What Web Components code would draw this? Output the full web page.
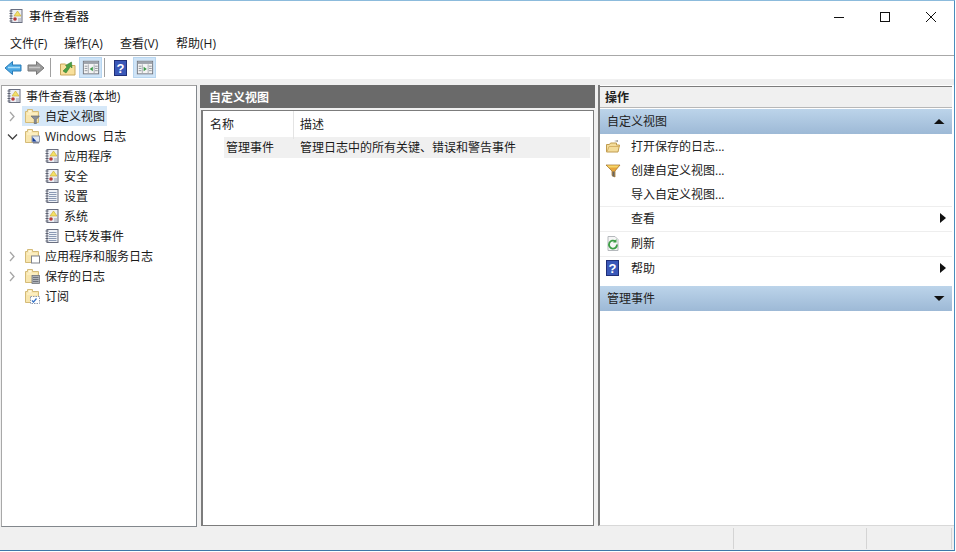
<!DOCTYPE html>
<html lang="zh">
<head>
<meta charset="utf-8">
<title>事件查看器</title>
<style>
  html, body { margin: 0; background: #fff; }
  body { font: 12px "Open Sans", "Noto Sans CJK SC", sans-serif; color: #1a1a1a; }
</style>
</head>
<body>
<ev-window>
  <ev-titlebar slot="title">事件查看器</ev-titlebar>
  <ev-menubar slot="menu"></ev-menubar>
  <ev-toolbar slot="tools"></ev-toolbar>

  <ev-tree slot="left">
    <ev-node icon="log" depth="0">事件查看器 (本地)</ev-node>
    <ev-node icon="folderfilter" depth="1" arrow="right" selected>自定义视图</ev-node>
    <ev-node icon="folderwin" depth="1" arrow="down" style="word-spacing:3px">Windows 日志</ev-node>
    <ev-node icon="log" depth="2">应用程序</ev-node>
    <ev-node icon="log" depth="2">安全</ev-node>
    <ev-node icon="page" depth="2">设置</ev-node>
    <ev-node icon="log" depth="2">系统</ev-node>
    <ev-node icon="page" depth="2">已转发事件</ev-node>
    <ev-node icon="folderapp" depth="1" arrow="right">应用程序和服务日志</ev-node>
    <ev-node icon="foldersave" depth="1" arrow="right">保存的日志</ev-node>
    <ev-node icon="foldersub" depth="1">订阅</ev-node>
  </ev-tree>

  <ev-views slot="center"></ev-views>

  <ev-actions slot="right">
    <ev-section open>自定义视图</ev-section>
    <ev-action icon="open">打开保存的日志...</ev-action>
    <ev-action icon="funnel">创建自定义视图...</ev-action>
    <ev-action>导入自定义视图...</ev-action>
    <ev-action line submenu>查看</ev-action>
    <ev-action line icon="refresh">刷新</ev-action>
    <ev-action line icon="help" submenu>帮助</ev-action>
    <ev-section style="margin-top:5px">管理事件</ev-section>
  </ev-actions>

  <ev-statusbar slot="status"></ev-statusbar>
</ev-window>

<script>
const FOLDER = `<path d="M1.5 14.500V3.500h2V1.500h5v2h6v11z" fill="#f8e6ae" stroke="#d4bb78"/><path d="M4.500 2.500h3v2h-3z" fill="#fff8e0"/><path d="M3 6h10" stroke="#fff6d4"/>`;
const PANE = `<rect x="1.500" y="2.500" width="17" height="14" fill="#f4f4f4" stroke="#70747c"/><path d="M2 3h16v2.500H2z" fill="#9ea3ab"/><path d="M7 6v10M13.500 6v10" stroke="#a4a8b0"/><path d="M3 8h3M3 10.500h3M3 13h3M14.500 8h3M14.500 10.500h3M14.500 13h3" stroke="#8a8e96"/>`;
const ICONS = {
  log: `<rect x="3" y="1.500" width="11" height="13" fill="#eceef4" stroke="#6a6f80"/>
    <path d="M1.500 3h3M1.500 5.500h3M1.500 8h3M1.500 10.500h3M1.500 13h3" stroke="#5a6070"/>
    <path d="M9.500 3l3.500 5H6z" fill="#f2e06a" stroke="#c9a92c" stroke-width=".6"/>
    <circle cx="7" cy="11" r="1.800" fill="#b83a3a"/><path d="M10 11h3M10 13h3" stroke="#9aa0b0"/>`,
  page: `<rect x="3" y="1.500" width="11" height="13" fill="#eef1f6" stroke="#6a6f80"/>
    <path d="M1.500 3h3M1.500 5.500h3M1.500 8h3M1.500 10.500h3M1.500 13h3" stroke="#5a6070"/>
    <path d="M5 4.500h7.500M5 6.500h7.500M5 8.500h7.500M5 10.500h7.500M5 12.500h7.500" stroke="#8b9ab5"/>`,
  folderfilter: FOLDER + `<path d="M7 8h8.500l-3.200 3.500v4.500h-2v-4.500z" fill="#8a8f98" stroke="#60646c" stroke-width=".6"/>`,
  folderwin: FOLDER + `<rect x="8" y="8" width="7.500" height="6" fill="#dfe6f2" stroke="#7b86a0" stroke-width=".8"/><path d="M8.500 9l4 4.500h-4z" fill="#123a96"/><rect x="9" y="14" width="6" height="1.500" fill="#7a8090"/>`,
  folderapp: FOLDER + `<rect x="7.500" y="8" width="8" height="7" fill="#fff" stroke="#80848c"/>`,
  foldersave: FOLDER + `<rect x="8" y="7.500" width="7.500" height="8" fill="#aeb2b8" stroke="#70747c" stroke-width=".8"/><path d="M9 9.500h5.500M9 11.500h5.500M9 13.500h5.500" stroke="#70747c"/>`,
  foldersub: FOLDER + `<rect x="6.500" y="8.500" width="9" height="7" fill="#fff" stroke="#8c98ae" stroke-dasharray="1.500 1"/><path d="M8 12.500l1.500 1.500 3-3.500" fill="none" stroke="#3572c6" stroke-width="1.200"/>`,
  back: `<path d="M1 9l7.500-6.500V6H17v6H8.500v3.500z" fill="#4aa8e4" stroke="#2a7cb8"/><path d="M4 8.500h12" stroke="#a8dcf8" stroke-width="1.500"/>`,
  forward: `<path d="M17 9L9.500 2.500V6H1v6h8.500v3.500z" fill="#9c9c9c" stroke="#787878"/><path d="M2 8.500h11" stroke="#c8c8c8" stroke-width="1.500"/>`,
  up: `<path d="M1.500 16V5h5l1.500 1.500h8V16z" fill="#f8e09c" stroke="#c8a85c"/><path d="M4 12l4-4-1.500-1.500L12.500 3l.5 6-1.500-1.500L7 14z" fill="#4aa044" stroke="#2c742a" stroke-width=".5"/>`,
  paneleft: PANE + `<path d="M12 8.500v5l-3.500-2.500z" fill="#3a9a48"/>`,
  paneright: PANE + `<path d="M8.500 8.500v5l3.500-2.500z" fill="#3a9a48"/>`,
  help: `<rect x="1.500" y="1.500" width="12" height="15" fill="#3a58b8" stroke="#1f2f78"/><text x="7.500" y="13.500" text-anchor="middle" font-family="Liberation Sans" font-weight="700" font-size="13" fill="#fff">?</text>`,
  open: `<path d="M1.500 14V6.500h3l1-1.500h6v2h3L13 14z" fill="#f3dc9a" stroke="#c09c50"/><path d="M2 14l2-5.500h11" fill="none" stroke="#d6b268"/><path d="M9 3l4-1v2z" fill="#9a9a9a"/>`,
  funnel: `<path d="M1 3h14l-5 6v6l-3-1.500V9z" fill="#e6a63c" stroke="#9a6e28" stroke-width=".7"/><path d="M2 3.500h12l-2 2H4z" fill="#f6d66a"/><path d="M7.500 9.500h2v5h-2z" fill="#666"/>`,
  refresh: `<path d="M3 1.500h7l3 3v11H3z" fill="#f6f6f6" stroke="#b4b8bc"/><path d="M12 9.500a4 4 0 1 1-1.500-3" fill="none" stroke="#3d9e46" stroke-width="1.800"/><path d="M11.500 4v3.500H8z" fill="#3d9e46"/>`
};

class EvIcon extends HTMLElement {
  connectedCallback() {
    const size = this.getAttribute("size") || 16;
    const h = this.getAttribute("h") || size;
    const vb = this.getAttribute("vb") || `0 0 ${size} ${h}`;
    this.attachShadow({ mode: "open" }).innerHTML = `
      <style>:host { display: block; width: ${size}px; height: ${h}px; flex: none; } svg { display: block; }</style>
      <svg width="${size}" height="${h}" viewBox="${vb}">${ICONS[this.getAttribute("name")] || ""}</svg>`;
  }
}

class EvWindow extends HTMLElement {
  constructor() {
    super();
    this.attachShadow({ mode: "open" }).innerHTML = `
      <style>
        :host { display: flex; flex-direction: column; width: 955px; height: 551px; box-sizing: border-box;
                background: #fff; border-right: 1px solid #4a8cbc; border-bottom: 1px solid #3f78a8; border-top: 1px solid #8cbbdc; }
        .panes { flex: 1; min-height: 0; display: grid; grid-template-columns: 197px 395px 1fr; column-gap: 3px;
                 background: #f0f0f0; padding-top: 6px; }
      </style>
      <slot name="title"></slot><slot name="menu"></slot><slot name="tools"></slot>
      <div class="panes"><slot name="left"></slot><slot name="center"></slot><slot name="right"></slot></div>
      <slot name="status"></slot>`;
  }
}

class EvTitlebar extends HTMLElement {
  constructor() {
    super();
    this.attachShadow({ mode: "open" }).innerHTML = `
      <style>
        :host { display: flex; align-items: center; height: 31px; padding-left: 8px; font-size: 12px; color: #111; }
        .label { margin-left: 5px; flex: 1; margin-top: -1px; }
        .btn { width: 46px; height: 31px; display: flex; align-items: center; justify-content: center; }
        ev-icon { margin-top: -1px; }
      </style>
      <ev-icon name="log"></ev-icon><span class="label"><slot></slot></span>
      <span class="btn"><svg width="12" height="12" viewBox="0 0 12 12"><path d="M1 6.500h10" stroke="#111"/></svg></span>
      <span class="btn"><svg width="12" height="12" viewBox="0 0 12 12"><rect x="1.500" y="1.500" width="9" height="9" fill="none" stroke="#111"/></svg></span>
      <span class="btn"><svg width="12" height="12" viewBox="0 0 12 12"><path d="M1 1l10 10M11 1L1 11" stroke="#111"/></svg></span>`;
  }
}

class EvMenubar extends HTMLElement {
  constructor() {
    super();
    const items = ["文件(F)", "操作(A)", "查看(V)", "帮助(H)"];
    this.attachShadow({ mode: "open" }).innerHTML = `
      <style>
        :host { display: grid; grid-template-columns: 54px 56px 56px 56px; align-items: center; height: 24px; padding: 0 0 2px 10px; box-sizing: border-box;
                border-bottom: 1px solid #a8a8a8; color: #1a1a1a; font-size: 12px; }
        span { white-space: nowrap; }
      </style>
      ${items.map(t => `<span>${t}</span>`).join("")}`;
  }
}

class EvToolbar extends HTMLElement {
  constructor() {
    super();
    this.attachShadow({ mode: "open" }).innerHTML = `
      <style>
        :host { display: flex; align-items: center; height: 23px; padding-left: 4px; background: #fff; }
        .b { height: 21px; display: flex; align-items: center; justify-content: center; box-sizing: border-box; flex: none; }
        .on { background: #cfe4f7; border: 1px solid #b8d6f0; width: 23px; }
        .sep { width: 1px; height: 19px; background: #a0a0a0; flex: none; }
      </style>
      <span class="b"><ev-icon name="back" size="18"></ev-icon></span>
      <span class="b" style="margin-left:5px"><ev-icon name="forward" size="18"></ev-icon></span>
      <span class="sep" style="margin-left:5px"></span>
      <span class="b" style="margin-left:8px"><ev-icon name="up" size="18"></ev-icon></span>
      <span class="b on" style="margin-left:2px"><ev-icon name="paneleft" size="18" vb="0 0 20 20"></ev-icon></span>
      <span class="sep" style="margin-left:2px"></span>
      <span class="b" style="margin-left:8px"><ev-icon name="help" size="15" h="18"></ev-icon></span>
      <span class="b on" style="margin-left:5px"><ev-icon name="paneright" size="18" vb="0 0 20 20"></ev-icon></span>`;
  }
}

class EvTree extends HTMLElement {
  constructor() {
    super();
    this.attachShadow({ mode: "open" }).innerHTML = `
      <style>
        :host { display: block; margin-left: 1px; background: #fff; border: 1px solid #82878c; border-left-color: #a8a8a8; border-top-color: #a0a0a0;
                overflow: hidden; }
      </style>
      <slot></slot>`;
  }
}

class EvNode extends HTMLElement {
  constructor() {
    super();
    const depth = +this.getAttribute("depth");
    const arrow = this.getAttribute("arrow");
    const sel = this.hasAttribute("selected");
    const pad = [2, 5, 40][depth];
    const chev = arrow === "right" ? `<path d="M3 2l4 4.500-4 4.500" fill="none" stroke="#a6a6a6" stroke-width="1.300"/>`
      : arrow === "down" ? `<path d="M1 4.500l4.500 4.500 4.500-4.500" fill="none" stroke="#404040" stroke-width="1.300"/>` : "";
    this.attachShadow({ mode: "open" }).innerHTML = `
      <style>
        :host { display: flex; align-items: center; height: 20px; padding-left: ${pad}px; font-size: 12px; color: #1a1a1a; white-space: nowrap; }
        .arrow { width: 12px; flex: none; margin-right: 3px; display: ${depth === 1 ? "block" : "none"}; }
        .item { display: flex; align-items: center; height: 20px; gap: ${depth === 1 ? 5 : 4}px; padding: 0 2px; ${sel ? "background: #d6e8f8;" : ""} }
        svg { display: block; }
      </style>
      <span class="arrow"><svg width="12" height="13" viewBox="0 0 12 13">${chev}</svg></span>
      <span class="item"><ev-icon name="${this.getAttribute("icon")}"></ev-icon><span><slot></slot></span></span>`;
  }
}

class EvViews extends HTMLElement {
  constructor() {
    super();
    this.attachShadow({ mode: "open" }).innerHTML = `
      <style>
        :host { display: flex; flex-direction: column; gap: 2px; min-height: 0; font-size: 12px; }
        .head { height: 23px; flex: none; background: #6a6a6a; color: #fff; font-weight: 700; display: flex; align-items: center; padding-left: 9px; }
        .list { flex: 1; background: #fff; border: 1px solid #7c7c7c; border-left-width: 2px; margin: 0 1px 1px; padding: 0 3px 0 0; }
        .cols { display: grid; grid-template-columns: 91px 1fr; height: 26px; line-height: 28px; color: #222; }
        .cols span:first-child { padding-left: 7px; border-right: 1px solid #e4e4e4; box-sizing: border-box; }
        .cols span:last-child { padding-left: 6px; }
        .row { display: grid; grid-template-columns: 69px 1fr; margin-left: 21px; height: 21px; padding-bottom: 1px; box-sizing: border-box; align-items: center; background: #f0f0f0; }
        .row span:first-child { padding-left: 2px; }
        .row span:last-child { padding-left: 7px; }
      </style>
      <div class="head">自定义视图</div>
      <div class="list">
        <div class="cols"><span>名称</span><span>描述</span></div>
        <div class="row"><span>管理事件</span><span>管理日志中的所有关键、错误和警告事件</span></div>
      </div>`;
  }
}

class EvActions extends HTMLElement {
  constructor() {
    super();
    this.attachShadow({ mode: "open" }).innerHTML = `
      <style>
        :host { display: flex; flex-direction: column; min-height: 0; background: #fff; border-left: 2px solid #7c7c7c; border-bottom: 1px solid #d8d8d8; margin-bottom: 1px; padding-right: 2px; }
        .head { height: 20px; flex: none; background: #f0f0f0; border-top: 1px solid #7c7c7c; border-bottom: 1px solid #b8b8b8; font-weight: 700; font-size: 12px;
                padding-left: 5px; line-height: 21px; margin: 1px 0; color: #222; }
      </style>
      <div class="head">操作</div>
      <slot></slot>`;
  }
}

class EvSection extends HTMLElement {
  constructor() {
    super();
    const tri = this.hasAttribute("open") ? "M5 1L10.500 6H0z" : "M0 1h10.500L5 6z";
    this.attachShadow({ mode: "open" }).innerHTML = `
      <style>
        :host { display: flex; align-items: center; justify-content: space-between; height: 25px; flex: none; box-sizing: border-box;
                padding: 0 7px 2px 7px; font-size: 12px; color: #222; background: linear-gradient(#bcd4ea, #9db9d6); }
        svg { display: block; margin-top: 2px; }
      </style>
      <span><slot></slot></span>
      <svg width="11" height="7" viewBox="0 0 11 7"><path d="${tri}" fill="#111"/></svg>`;
  }
}

class EvAction extends HTMLElement {
  constructor() {
    super();
    const icon = this.getAttribute("icon");
    const line = this.hasAttribute("line");
    this.attachShadow({ mode: "open" }).innerHTML = `
      <style>
        :host { display: flex; align-items: center; height: ${line ? 25 : 24}px; box-sizing: border-box; padding: 0 6px ${line ? 3 : 0}px 5px; font-size: 12px; color: #222;
                ${line ? "border-top: 1px solid #eeeeee;" : ""} }
        .ic { width: 26px; flex: none; }
        .t { flex: 1; }
        .m { display: ${this.hasAttribute("submenu") ? "block" : "none"}; }
      </style>
      <span class="ic">${icon === "help" ? `<ev-icon name="help" size="15" h="18"></ev-icon>` : icon ? `<ev-icon name="${icon}"></ev-icon>` : ""}</span>
      <span class="t"><slot></slot></span>
      <svg class="m" width="6" height="10" viewBox="0 0 6 10"><path d="M0 0l6 5-6 5z" fill="#111"/></svg>`;
  }
}

class EvStatusbar extends HTMLElement {
  constructor() {
    super();
    this.attachShadow({ mode: "open" }).innerHTML = `
      <style>
        :host { display: grid; grid-template-columns: 734px 133px 1fr; height: 23px; background: #f0f0f0; }
        span { border-right: 1px solid #d4d4d4; margin: 1px 0; }
        span:last-child { margin-right: 2px; }
      </style>
      <span></span><span></span><span></span>`;
  }
}

customElements.define("ev-icon", EvIcon);
customElements.define("ev-window", EvWindow);
customElements.define("ev-titlebar", EvTitlebar);
customElements.define("ev-menubar", EvMenubar);
customElements.define("ev-toolbar", EvToolbar);
customElements.define("ev-tree", EvTree);
customElements.define("ev-node", EvNode);
customElements.define("ev-views", EvViews);
customElements.define("ev-actions", EvActions);
customElements.define("ev-section", EvSection);
customElements.define("ev-action", EvAction);
customElements.define("ev-statusbar", EvStatusbar);
</script>
</body>
</html>
